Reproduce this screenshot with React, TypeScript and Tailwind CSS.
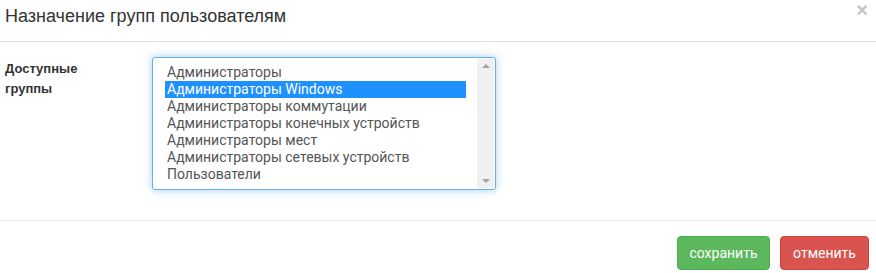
import React from "react";

const items = [
  "Администраторы",
  "Администраторы Windows",
  "Администраторы коммутации",
  "Администраторы конечных устройств",
  "Администраторы мест",
  "Администраторы сетевых устройств",
  "Пользователи",
];

export default function App() {
  return (
    <div className="w-[876px] h-[273px] bg-white text-[#333] overflow-hidden" style={{ fontFamily: "'Liberation Sans', Arial, sans-serif" }}>
      <div className="h-[42px] border-b border-[#e5e5e5] flex items-start justify-between pl-[5px] pr-[8px]">
        <div className="text-[18px] leading-[20px] mt-[6px] text-[#333]">Назначение групп пользователям</div>
        <div className="text-[#c4c4c4] text-[20px] leading-[20px] mt-[0px] font-bold">×</div>
      </div>
      <div className="h-[178px] flex pl-[5px] pt-[15px]">
        <div className="w-[147px] text-[13px] font-bold leading-[20px] pt-[2px] text-[#333]">
          Доступные
          <br />
          группы
        </div>
        <div className="w-[344px] h-[133px] border border-[#66afe9] rounded-[3px] shadow-[0_0_8px_rgba(102,175,233,0.6)] flex bg-white">
          <div className="flex-1 pt-[6px] pl-[12px] pr-[11px]" style={{ fontFamily: "Roboto, 'Open Sans', sans-serif" }}>
            {items.map((t, i) => (
              <div
                key={t}
                className={
                  "h-[17px] leading-[17px] text-[14px] pl-[2px] " +
                  (i === 1 ? "bg-[#1e90ff] text-white" : "text-[#555]")
                }
              >
                {t}
              </div>
            ))}
          </div>
          <div className="w-[17px] bg-[#f0f0f0] flex flex-col justify-between items-center py-[5px] mr-[1px] my-[1px]">
            <div className="w-0 h-0 border-l-[4px] border-r-[4px] border-b-[4px] border-l-transparent border-r-transparent border-b-[#a3a3a3]" />
            <div className="w-0 h-0 border-l-[4px] border-r-[4px] border-t-[4px] border-l-transparent border-r-transparent border-t-[#a3a3a3]" />
          </div>
        </div>
      </div>
      <div className="border-t border-[#e5e5e5] flex justify-end pt-[15px] pr-[7px] gap-[10px]" style={{ fontFamily: "Roboto, 'Open Sans', sans-serif" }}>
        <button className="w-[93px] h-[34px] rounded-[4px] bg-[#5cb85c] border border-[#4cae4c] text-white text-[14px]">сохранить</button>
        <button className="w-[89px] h-[34px] rounded-[4px] bg-[#d9534f] border border-[#d43f3a] text-white text-[14px]">отменить</button>
      </div>
    </div>
  );
}
